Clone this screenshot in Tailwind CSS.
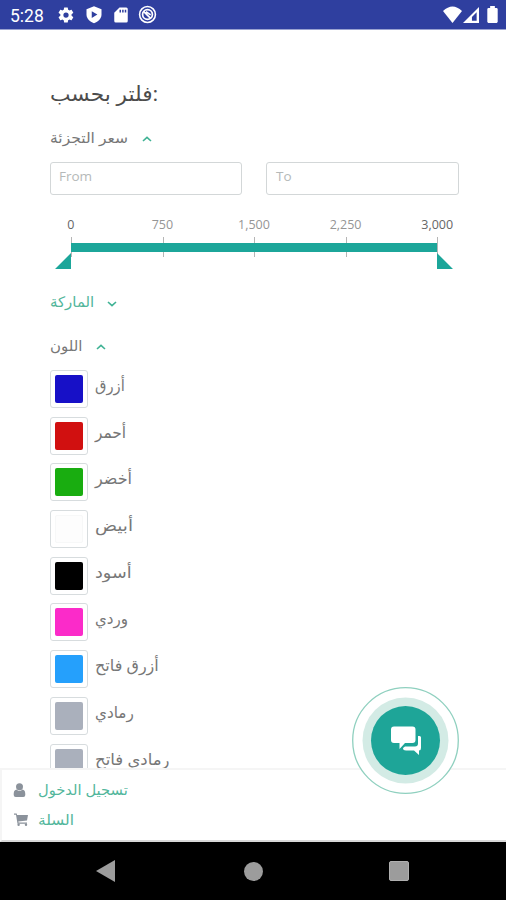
<!DOCTYPE html>
<html lang="ar" dir="ltr">
<head>
<meta charset="utf-8">
<title>فلتر</title>
<script src="https://cdn.jsdelivr.net/npm/@tailwindcss/browser@4"></script>
</head>
<body class="w-[506px] h-[900px] overflow-hidden bg-white font-['Open_Sans','DejaVu_Sans',sans-serif] text-[#777] flex flex-col relative">
<header class="h-[30px] shrink-0 bg-[#2f3f9f] border-b border-[#9aa2d0] flex items-center pl-[10px] pr-[8px] text-white">
  <span class="font-[Roboto,sans-serif] text-[17.5px] leading-[30px] w-[47px] pt-[2px]">5:28</span>
  <svg class="w-[18px] h-[18px] mt-px" viewBox="0 0 24 24" fill="currentColor"><path d="M19.4 13a7.800 7.800 0 0 0 0-2l2.100-1.600c.2-.2.300-.4.100-.7l-2-3.400c-.1-.2-.4-.3-.6-.2l-2.500 1a7 7 0 0 0-1.700-1L14.400 2.400a.5.5 0 0 0-.5-.4h-4a.5.5 0 0 0-.5.4L9 5.100a7 7 0 0 0-1.700 1l-2.500-1c-.2-.1-.5 0-.6.200l-2 3.400c-.1.200-.1.500.1.700L4.500 11a7.800 7.800 0 0 0 0 2l-2.200 1.600c-.2.200-.2.400-.1.700l2 3.400c.1.200.4.300.6.200l2.500-1a7 7 0 0 0 1.700 1l.4 2.700c0 .2.200.4.500.4h4c.3 0 .5-.2.500-.4l.4-2.700a7 7 0 0 0 1.700-1l2.500 1c.2.100.5 0 .6-.2l2-3.400c.1-.2.100-.5-.1-.7zM12 15.500a3.500 3.500 0 1 1 0-7 3.500 3.500 0 0 1 0 7z"/></svg>
  <svg class="w-[18px] h-[19px] ml-[10px]" viewBox="0 0 24 24"><path fill="currentColor" d="M12 1 2 5v7c0 5 4 9.500 10 11.500C18 21.500 22 17 22 12V5z"/><path fill="#2f3f9f" d="m9 7.500 7.500 4.500L9 16.500z"/></svg>
  <svg class="w-[18px] h-[18px] ml-[9px] mt-px" viewBox="0 0 24 24"><path fill="currentColor" d="M10 2h9a2 2 0 0 1 2 2v16a2 2 0 0 1-2 2H5a2 2 0 0 1-2-2V9z"/><path fill="#2f3f9f" d="M10 5h2v3.500h-2zm3.500 0h2v3.500h-2zM17 5h2v3.500h-2z"/></svg>
  <svg class="w-[19px] h-[19px] ml-[8px]" viewBox="0 0 24 24" fill="none" stroke="currentColor"><circle cx="12" cy="12" r="10" stroke-width="2"/><circle cx="12" cy="12" r="6.200" stroke-width="2.200"/><path d="m7 8 9 9M10 8.500l6 4" stroke-width="2.200"/></svg>
  <svg class="w-[19px] h-[17px] ml-auto" viewBox="0 0 19 17" fill="currentColor"><path d="M0 5Q9.500-4 19 5L9.500 17z"/></svg>
  <svg class="w-[16px] h-[16px] ml-[1px] mt-[1px]" viewBox="0 0 17 17"><path fill="currentColor" fill-rule="evenodd" d="M17 0v17H0zM14.500 5.500v9h-5V10.500z"/></svg>
  <svg class="w-[11px] h-[17px] ml-[8px]" viewBox="0 0 11 18" fill="currentColor"><path d="M3 0h5v2h2l1 1v14l-1 1H1l-1-1V3l1-1h2z"/></svg>
</header>

<main class="h-[738px] shrink-0 overflow-hidden pl-[50px] pr-[47px] pt-[45px]">
  <h1 class="h-[36px] flex items-center text-[20.5px] text-[#4c4c4c] whitespace-nowrap"><span class="origin-left scale-x-[1.06]">فلتر بحسب:</span></h1>
  <div class="h-[30px] mt-[12px] flex items-center text-[14.500px] whitespace-nowrap">
    <span class="w-[73px] mr-[5px] origin-left scale-x-[1.07]">سعر التجزئة</span>
    <svg class="w-[10px] h-[6px] ml-[14px] mt-[2px]" viewBox="0 0 10 6" fill="none" stroke="#3fb294" stroke-width="1.600"><path d="M1 5 5 1.300 9 5"/></svg>
  </div>
  <div class="mt-[9px] flex gap-[24px] text-[13.500px] leading-[26px] text-[#b5b9b9]">
    <div class="w-[192px] h-[33px] border-[1.500px] border-[#d3d7d8] rounded-[3px] pl-[8px]">From</div>
    <div class="w-[193px] h-[33px] border-[1.500px] border-[#d3d7d8] rounded-[3px] pl-[9px]">To</div>
  </div>
  <div class="mt-[20px] h-[19px] -ml-[25px] w-[458px] grid grid-cols-5 text-center text-[12.500px] leading-[19px] text-[#959595]">
    <span class="text-[#666]">0</span><span>750</span><span>1,500</span><span>2,250</span><span class="text-[#666]">3,000</span>
  </div>
  <svg class="block -ml-[1px] w-[410px] h-[36px]" viewBox="0 0 410 36"><path d="M22.500 3v20M114.500 3v20M205.500 3v20M297.500 3v20M388.500 3v20" stroke="#b5b5b5"/><path d="M22 9h366v9H22zM22 19v16H6zM388 19v16h16z" fill="#1ca69a"/></svg>
  <div class="h-[30px] mt-[17px] flex items-center text-[14.500px] text-[#52b69b] whitespace-nowrap">
    <span class="w-[43px] mr-px origin-left scale-x-[1.03]">الماركة</span>
    <svg class="w-[10px] h-[6px] ml-[13px] mt-[3px]" viewBox="0 0 10 6" fill="none" stroke="#3fb294" stroke-width="1.600"><path d="M1 1 5 4.700 9 1"/></svg>
  </div>
  <div class="h-[30px] mt-[14px] flex items-center text-[14.500px] whitespace-nowrap">
    <span class="w-[32px] mr-px origin-left scale-x-[1.03]">اللون</span>
    <svg class="w-[10px] h-[6px] ml-[13px] mt-[2px]" viewBox="0 0 10 6" fill="none" stroke="#3fb294" stroke-width="1.600"><path d="M1 5 5 1.300 9 5"/></svg>
  </div>
  <ul class="mt-[9px] flex flex-col gap-[8.700px] text-[16px] leading-[30px] whitespace-nowrap">
    <li class="flex h-[38px] gap-[7px]"><i class="size-[38px] border-[1.500px] border-[#d7dcde] rounded-[3px] p-[4px] flex"><b class="flex-1 rounded-[2px] bg-[#1710c7]"></b></i><span class="origin-left scale-x-[0.92]">أزرق</span></li>
    <li class="flex h-[38px] gap-[7px]"><i class="size-[38px] border-[1.500px] border-[#d7dcde] rounded-[3px] p-[4px] flex"><b class="flex-1 rounded-[2px] bg-[#d11010]"></b></i><span class="origin-left scale-x-[0.96]">أحمر</span></li>
    <li class="flex h-[38px] gap-[7px]"><i class="size-[38px] border-[1.500px] border-[#d7dcde] rounded-[3px] p-[4px] flex"><b class="flex-1 rounded-[2px] bg-[#19ad10]"></b></i><span>أخضر</span></li>
    <li class="flex h-[38px] gap-[7px]"><i class="size-[38px] border-[1.500px] border-[#d7dcde] rounded-[3px] p-[4px] flex"><b class="flex-1 rounded-[2px] border border-[#f7f8f8] bg-[#fdfdfd]"></b></i><span class="origin-left scale-x-[1.14]">أبيض</span></li>
    <li class="flex h-[38px] gap-[7px]"><i class="size-[38px] border-[1.500px] border-[#d7dcde] rounded-[3px] p-[4px] flex"><b class="flex-1 rounded-[2px] bg-black"></b></i><span class="origin-left scale-x-[1.1]">أسود</span></li>
    <li class="flex h-[38px] gap-[7px]"><i class="size-[38px] border-[1.500px] border-[#d7dcde] rounded-[3px] p-[4px] flex"><b class="flex-1 rounded-[2px] bg-[#fb2bc9]"></b></i><span class="origin-left scale-x-[0.94]">وردي</span></li>
    <li class="flex h-[38px] gap-[7px]"><i class="size-[38px] border-[1.500px] border-[#d7dcde] rounded-[3px] p-[4px] flex"><b class="flex-1 rounded-[2px] bg-[#25a0fc]"></b></i><span>أزرق فاتح</span></li>
    <li class="flex h-[38px] gap-[7px]"><i class="size-[38px] border-[1.500px] border-[#d7dcde] rounded-[3px] p-[4px] flex"><b class="flex-1 rounded-[2px] bg-[#aab0bc]"></b></i><span class="origin-left scale-x-[0.95]">رمادي</span></li>
    <li class="flex h-[38px] gap-[7px]"><i class="size-[38px] border-[1.500px] border-[#d7dcde] rounded-[3px] p-[4px] flex"><b class="flex-1 rounded-[2px] bg-[#aab0bc]"></b></i><span class="origin-left scale-x-[1.03]">رمادي فاتح</span></li>
  </ul>
</main>

<footer class="h-[74px] shrink-0 border-t-2 border-l-2 border-[#f5f5f5] border-b-2 border-b-[#d8d8d8] pl-[11px] pt-[5px] text-[14px] text-[#52b69b] bg-white">
  <div class="h-[29px] flex items-center"><svg class="w-[13px] h-[14px] mr-[12px]" viewBox="0 0 13 14" fill="#8b929b"><circle cx="6.500" cy="3.700" r="3.500"/><path d="M3.500 6.500C1 7 .7 9 .7 12q0 2 2 2h7.600q2 0 2-2c0-3-.3-5-2.800-5.500-1.500 1.700-4.500 1.700-6 0z"/></svg><span class="origin-left scale-x-[1.05]">تسجيل الدخول</span></div>
  <div class="h-[30px] flex items-center"><svg class="w-[14px] h-[13px] ml-px mr-[10px]" viewBox="0 0 14 13" fill="#8b929b"><path d="M0 .5h2.700l.4 1.500H14l-1 5.500-8.700 1 .2 1H13v1.200H3.500L2 1.700H0z"/><circle cx="4.600" cy="11.700" r="1.200"/><circle cx="12" cy="11.700" r="1.200"/></svg><span class="origin-left scale-x-[1.1]">السلة</span></div>
</footer>

<nav class="h-[58px] shrink-0 bg-black flex items-center pl-[96px]">
  <svg class="w-[19px] h-[22px]" viewBox="0 0 19 22" fill="#9c9c9c"><path d="M19 0v22L0 11z"/></svg>
  <span class="ml-[129px] size-[19px] rounded-full bg-[#9c9c9c]"></span>
  <span class="ml-[126px] size-[20px] rounded-[2px] bg-[#9c9c9c] border border-[#b0b0b0]"></span>
</nav>

<button class="absolute left-[352px] top-[687px] size-[107px]" aria-label="محادثة">
  <svg viewBox="0 0 107 107" class="size-full"><circle cx="53.500" cy="53.500" r="52.800" fill="#fff" stroke="#8fd0bf" stroke-width="1.300"/><circle cx="53.500" cy="53.500" r="43" fill="#d3ebe5"/><circle cx="53.500" cy="53.500" r="34.500" fill="#1ea598"/><g fill="#fff"><path d="M42 39.500h18.500q3 0 3 3V53q0 3-3 3H53l-5.500 6V56H42q-3 0-3-3V42.500q0-3 3-3z"/><path d="M66 49h1.500q1.500 0 1.500 1.500V61q0 2.500-2 2.500V68l-5-4.500h-8q-3 0-3-2.500l2-1.500h10q3 0 3-3z"/></g></svg>
</button>
</body>
</html>
